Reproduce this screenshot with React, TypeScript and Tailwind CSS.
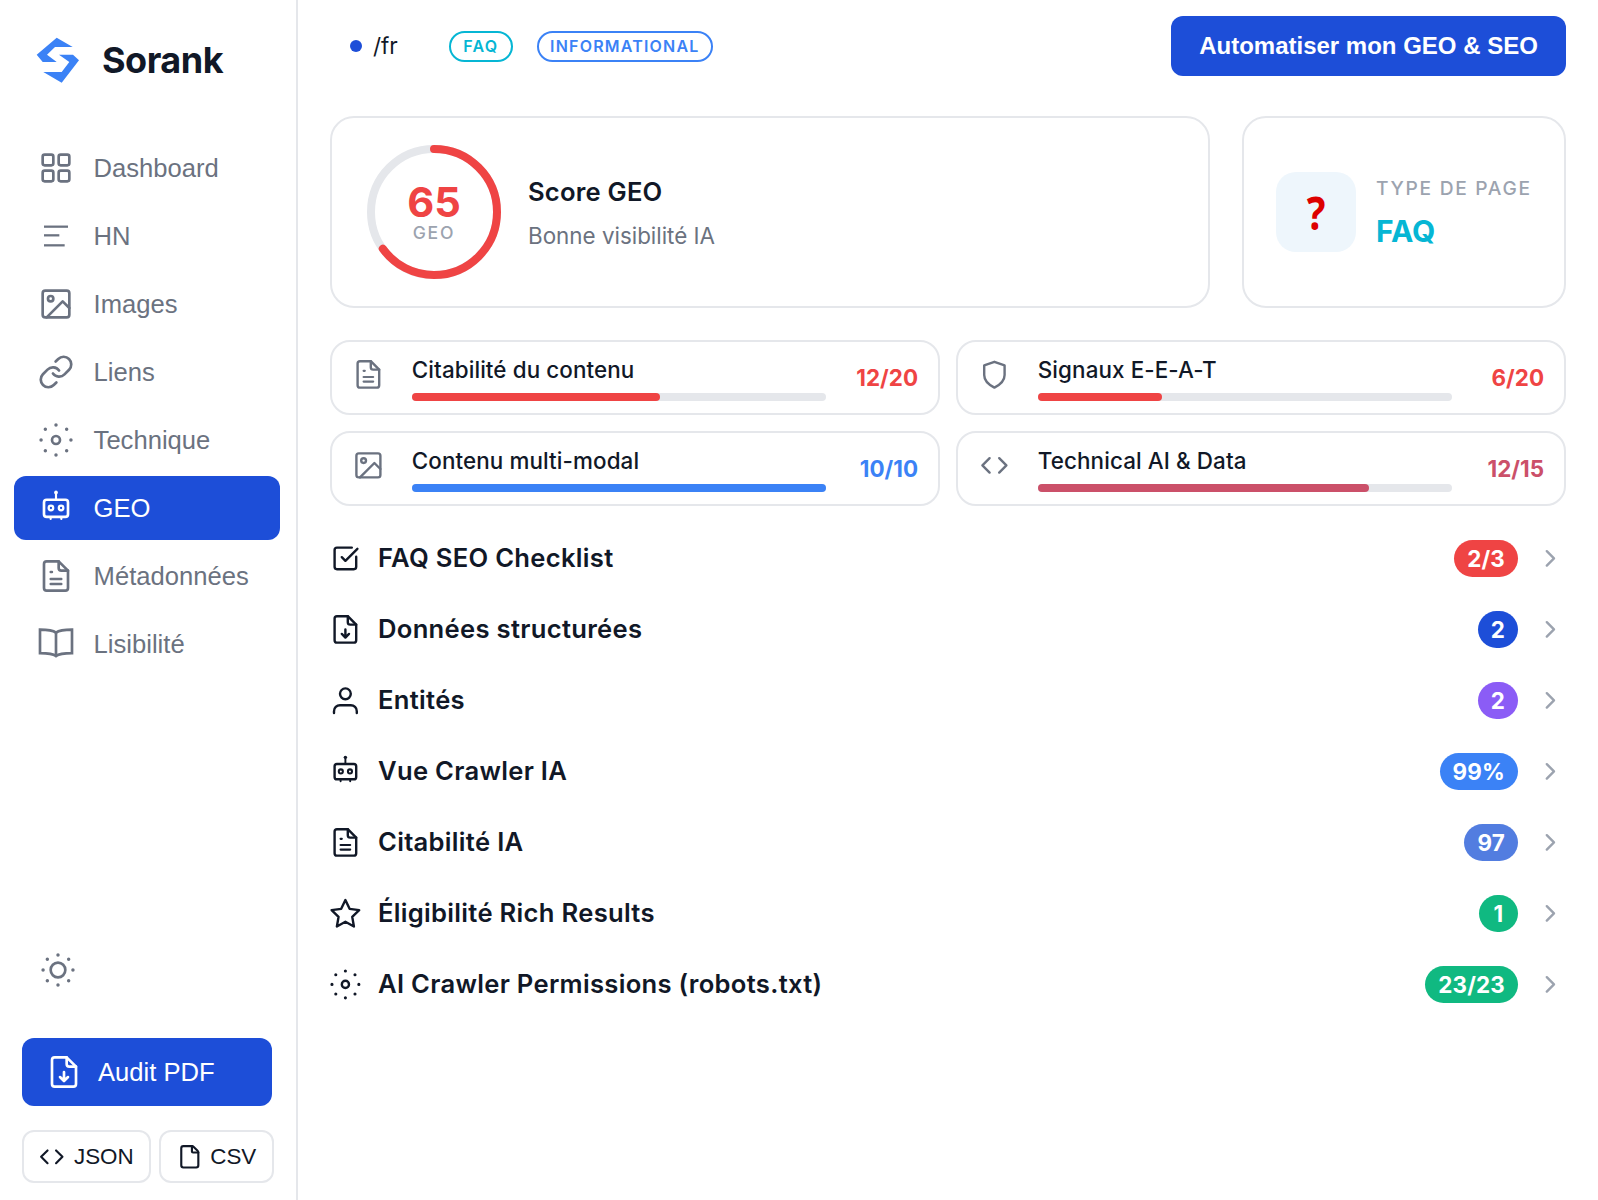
import { ChevronRight, Code, File, SquareCheckBig } from "lucide-react";
import type { ReactNode } from "react";

const font = { fontFamily: "Inter, 'Noto Sans', sans-serif" };
const buttonFont = { fontFamily: "'Liberation Sans', Arial, sans-serif" };

function Svg({ className, children }: { className?: string; children: ReactNode }) {
  return (
    <svg
      viewBox="0 0 24 24"
      fill="none"
      stroke="currentColor"
      strokeWidth={2}
      strokeLinecap="round"
      strokeLinejoin="round"
      className={`shrink-0 overflow-visible ${className ?? ""}`}
    >
      {children}
    </svg>
  );
}

type IconProps = { className?: string };

const GridIcon = ({ className }: IconProps) => (
  <Svg className={className}>
    <rect x="2" y="2" width="8" height="8" rx="1.5" />
    <rect x="14" y="2" width="8" height="8" rx="1.5" />
    <rect x="2" y="14" width="8" height="8" rx="1.5" />
    <rect x="14" y="14" width="8" height="8" rx="1.5" />
  </Svg>
);

const LinesIcon = ({ className }: IconProps) => (
  <Svg className={className}>
    <g strokeWidth={1.7} strokeLinecap="butt">
      <path d="M3 5h18" />
      <path d="M3 11.5h11.5" />
      <path d="M3 19h15.5" />
    </g>
  </Svg>
);

const ImageIcon = ({ className }: IconProps) => (
  <Svg className={className}>
    <rect x="2" y="2" width="20" height="20" rx="2" />
    <circle cx="8" cy="8" r="2" />
    <path d="M22 15l-5-5L5 22" />
  </Svg>
);

const LinkIcon = ({ className }: IconProps) => (
  <Svg className={className}>
    <g transform="translate(12 12) scale(1.15) translate(-12 -12)" strokeWidth={1.75}>
      <path d="M10 13a5 5 0 0 0 7.54.54l3-3a5 5 0 0 0-7.07-7.07l-1.72 1.71" />
      <path d="M14 11a5 5 0 0 0-7.54-.54l-3 3a5 5 0 0 0 7.07 7.07l1.71-1.71" />
    </g>
  </Svg>
);

const DotsIcon = ({ className, r = 3 }: IconProps & { r?: number }) => (
  <Svg className={className}>
    <circle cx="12" cy="12" r={r} />
    <path
      strokeWidth={2.6}
      d="M12 .8v.01M12 23.2v.01M.8 12h.01M23.2 12h.01M4 4v.01M20 4v.01M4 20v.01M20 20v.01"
    />
  </Svg>
);

const RobotIcon = ({ className }: IconProps) => (
  <Svg className={className}>
    <rect x="3" y="5.8" width="18" height="12.8" rx="2" />
    <path d="M12 .3v5.500" strokeWidth={1.6} />
    <circle cx="12" cy=".3" r="1.4" fill="currentColor" stroke="none" />
    <circle cx="8.2" cy="12" r="1.7" strokeWidth={1.7} />
    <circle cx="15.8" cy="12" r="1.7" strokeWidth={1.7} />
    <path d="M8 19v1.200M16 19v1.200" strokeWidth={1.6} />
  </Svg>
);

const FileTextIcon = ({ className }: IconProps) => (
  <Svg className={className}>
    <path d="M14 1H5a2 2 0 0 0-2 2v18a2 2 0 0 0 2 2h14a2 2 0 0 0 2-2V8z" />
    <path d="M14 1v5a2 2 0 0 0 2 2h5" />
    <path d="M8 9h1M8 14.2h8M8 18h8" strokeWidth={1.8} />
  </Svg>
);

const FileDownIcon = ({ className }: IconProps) => (
  <Svg className={className}>
    <path d="M14 1H5a2 2 0 0 0-2 2v18a2 2 0 0 0 2 2h14a2 2 0 0 0 2-2V8z" />
    <path d="M14 1v5a2 2 0 0 0 2 2h5" />
    <path d="M12 12v6.5M9 15.8l3 3 3-3" />
  </Svg>
);

const BookIcon = ({ className }: IconProps) => (
  <Svg className={className}>
    <path d="M12 3.5C10 2 7 1.2 0 1.2v17.6c7 0 10 .6 12 2.2 2-1.6 5-2.2 12-2.2V1.2c-7 0-10 .8-12 2.3z" strokeLinejoin="miter" />
    <path d="M12 3.5V21" />
  </Svg>
);

const ShieldIcon = ({ className }: IconProps) => (
  <Svg className={className}>
    <path d="M12 1.5l8.5 3v8c0 5-4.5 8.500-8.500 10.500-4-2-8.500-5.500-8.500-10.500v-8z" />
  </Svg>
);

const StarIcon = ({ className }: IconProps) => (
  <Svg className={className}>
    <path d="M12 .8l3.500 7.400 8 1.100-5.800 5.600 1.400 8L12 19l-7.100 3.900 1.400-8L.5 9.300l8-1.100z" />
  </Svg>
);

const UserIcon = ({ className }: IconProps) => (
  <Svg className={className}>
    <circle cx="12" cy="6.500" r="4.500" />
    <path d="M2.500 22.500V21a5 5 0 0 1 5-5h9a5 5 0 0 1 5 5v1.500" />
  </Svg>
);

const nav = [
  { label: "Dashboard", icon: GridIcon },
  { label: "HN", icon: LinesIcon },
  { label: "Images", icon: ImageIcon },
  { label: "Liens", icon: LinkIcon },
  { label: "Technique", icon: DotsIcon },
  { label: "GEO", icon: RobotIcon, active: true },
  { label: "Métadonnées", icon: FileTextIcon },
  { label: "Lisibilité", icon: BookIcon },
];

const metrics = [
  { label: "Citabilité du contenu", score: "12/20", icon: FileTextIcon, bar: "bg-[#ef4444]", text: "text-[#ef4444]", width: "w-[60%]" },
  { label: "Signaux E-E-A-T", score: "6/20", icon: ShieldIcon, bar: "bg-[#ef4444]", text: "text-[#ef4444]", width: "w-[30%]" },
  { label: "Contenu multi-modal", score: "10/10", icon: ImageIcon, bar: "bg-[#3b82f6]", text: "text-[#3b82f6]", width: "w-full" },
  { label: "Technical AI & Data", score: "12/15", icon: Code, bar: "bg-[#cb5069]", text: "text-[#cb5069]", width: "w-[80%]" },
];

const rows = [
  { label: "FAQ SEO Checklist", badge: "2/3", icon: SquareCheckBig, color: "bg-[#ef4444]" },
  { label: "Données structurées", badge: "2", icon: FileDownIcon, color: "bg-[#1d4ed8]" },
  { label: "Entités", badge: "2", icon: UserIcon, color: "bg-[#8b5cf6]" },
  { label: "Vue Crawler IA", badge: "99%", icon: RobotIcon, color: "bg-[#3b82f6]" },
  { label: "Citabilité IA", badge: "97", icon: FileTextIcon, color: "bg-[#527de0]" },
  { label: "Éligibilité Rich Results", badge: "1", icon: StarIcon, color: "bg-[#10b981]" },
  { label: "AI Crawler Permissions (robots.txt)", badge: "23/23", icon: DotsIcon, color: "bg-[#10b981]" },
];

function Sidebar() {
  return (
    <aside className="flex h-[1200px] w-[298px] shrink-0 flex-col border-r-2 border-[#e5e7eb] pb-[17px]">
      <div className="mt-[32px] ml-[30px] flex items-center gap-[16px]">
        <svg viewBox="0 0 56 56" className="h-14 w-14 shrink-0" fill="#3b82f6">
          <path d="M26.700 5.700L42.700 15H25l-8 7.700L26.700 30h-14l-6-7.300z" />
          <path d="M29 22.700h14l6 5.600-17.300 22.400L13.300 40h18.400l7.600-10z" />
        </svg>
        <span className="text-[36px] leading-[56px] font-bold tracking-[-0.5px] text-[#111827]">Sorank</span>
      </div>
      <nav className="mt-[48px] flex flex-col gap-[4px] pr-[16px] pl-[14px]" style={buttonFont}>
        {nav.map((item) => {
          const Icon = item.icon;
          return (
            <div
              key={item.label}
              className={`flex h-[64px] items-center gap-[21.600px] rounded-[12px] pl-[26px] text-[25.600px] ${
                item.active ? "bg-[#1d4ed8] text-white" : "text-[#6b7280]"
              }`}
            >
              <Icon className="h-8 w-8" />
              <span>{item.label}</span>
            </div>
          );
        })}
      </nav>
      <div className="mt-auto flex flex-col px-[22px]" style={buttonFont}>
        <div className="ml-[20px] text-[#6b7280]">
          <DotsIcon r={5.500} className="h-8 w-8" />
        </div>
        <button className="mt-[52px] flex h-[68px] w-[250px] items-center gap-[18px] rounded-[12px] bg-[#1d4ed8] pl-[26px] text-[25.600px] text-white">
          <FileDownIcon className="h-8 w-8" />
          Audit PDF
        </button>
        <div className="mt-[24px] flex gap-[8px]">
          <button className="flex h-[53px] w-[129px] items-center justify-center gap-[9px] rounded-[12px] border-2 border-[#e5e7eb] text-[22.400px] text-[#111827]">
            <Code className="h-[25.600px] w-[25.600px]" />
            JSON
          </button>
          <button className="flex h-[53px] w-[115px] items-center justify-center gap-[8px] rounded-[12px] border-2 border-[#e5e7eb] text-[22.400px] text-[#111827]">
            <File className="h-[25.600px] w-[25.600px]" />
            CSV
          </button>
        </div>
      </div>
    </aside>
  );
}

function ScoreRing() {
  return (
    <div className="relative h-[134px] w-[134px] shrink-0">
      <svg viewBox="0 0 134 134" className="h-full w-full -rotate-90">
        <circle cx="67" cy="67" r="63" fill="none" stroke="#e5e7eb" strokeWidth="8" />
        <circle
          cx="67"
          cy="67"
          r="63"
          fill="none"
          stroke="#ef4444"
          strokeWidth="8"
          strokeLinecap="round"
          strokeDasharray="257.300 395.800"
        />
      </svg>
      <div className="absolute inset-0 flex flex-col items-center justify-center">
        <span className="mt-[2px] text-[41.600px] leading-[40px] font-bold text-[#ef4444]">65</span>
        <span className="text-[17.600px] leading-[22px] font-medium tracking-[1.800px] text-[#9ca3af]">GEO</span>
      </div>
    </div>
  );
}

export default function App() {
  return (
    <div className="flex min-h-[1200px] bg-white" style={font}>
      <Sidebar />
      <main className="flex min-w-0 flex-1 flex-col pt-[16px] pr-[32px] pl-[32px]">
        <header className="flex h-[60px] items-center">
          <span className="ml-[20px] h-3 w-3 rounded-full bg-[#1d4ed8]" />
          <span className="ml-[11px] text-[22.400px] text-[#111827]">/fr</span>
          <span className="ml-[51px] flex h-[31px] w-[64px] items-center justify-center rounded-full border-2 border-[#06b6d4] text-[16px] font-semibold tracking-[1.200px] text-[#06b6d4]">
            FAQ
          </span>
          <span className="ml-[24px] flex h-[31px] w-[176px] items-center justify-center rounded-full border-2 border-[#3b82f6] text-[16px] font-semibold tracking-[1.200px] text-[#3b82f6]">
            INFORMATIONAL
          </span>
          <button
            className="ml-auto h-[60px] w-[395px] rounded-[12px] bg-[#1d4ed8] text-[24px] font-bold text-white"
            style={buttonFont}
          >
            Automatiser mon GEO &amp; SEO
          </button>
        </header>

        <section className="mt-[40px] flex h-[192px] gap-[32px]">
          <div className="flex flex-1 items-center gap-[27px] rounded-[24px] border-2 border-[#e5e7eb] pl-[35px]">
            <ScoreRing />
            <div className="pt-[2px]">
              <div className="text-[25.600px] leading-[36px] font-semibold tracking-[0.200px] text-[#111827]">Score GEO</div>
              <div className="mt-[10px] text-[22.400px] leading-[32px] text-[#6b7280]">Bonne visibilité IA</div>
            </div>
          </div>
          <div className="flex w-[324px] items-center gap-[20px] rounded-[24px] border-2 border-[#e5e7eb] pl-[32px]">
            <div className="flex h-[80px] w-[80px] items-center justify-center rounded-[20px] bg-[#eef6fc]">
              <span
                className="scale-x-[0.85] text-[46px] leading-none font-bold text-[#dd0000]"
                style={{ fontFamily: "'Noto Sans', sans-serif" }}
              >
                ?
              </span>
            </div>
            <div className="pt-[1px]">
              <div className="text-[19.200px] leading-[28px] font-medium tracking-[1.700px] text-[#9ca3af]">TYPE DE PAGE</div>
              <div className="mt-[9px] text-[30px] leading-[40px] font-bold text-[#06b6d4]">FAQ</div>
            </div>
          </div>
        </section>

        <section className="mt-[32px] grid grid-cols-2 gap-[16px]">
          {metrics.map((m) => {
            const Icon = m.icon;
            return (
              <div key={m.label} className="flex h-[75px] items-center rounded-[20px] border-2 border-[#e5e7eb] pr-[20px] pl-[22px]">
                <Icon className="-mt-[6px] h-[28.800px] w-[28.800px] text-[#6b7280]" />
                <div className="ml-[29px] w-[414px] pt-[1px]">
                  <div className="text-[22.400px] leading-[30px] font-medium tracking-[0.100px] text-[#111827]">{m.label}</div>
                  <div className="mt-[7.500px] h-[8px] rounded-full bg-[#e5e7eb]">
                    <div className={`h-full rounded-full ${m.bar} ${m.width}`} />
                  </div>
                </div>
                <div className={`ml-auto text-[22.400px] font-bold ${m.text}`}>{m.score}</div>
              </div>
            );
          })}
        </section>

        <section className="mt-[17px] flex flex-col">
          {rows.map((r) => {
            const Icon = r.icon;
            return (
              <div key={r.label} className="flex h-[71px] items-center">
                <Icon className="ml-[1px] h-[28.800px] w-[28.800px] text-[#111827]" />
                <span className="ml-[18.200px] text-[25.600px] font-semibold tracking-[0.300px] text-[#111827]">{r.label}</span>
                <span className={`ml-auto flex h-[37px] min-w-[39px] items-center justify-center rounded-full px-[13px] text-[22.400px] font-bold tracking-[0.200px] text-white ${r.color}`}>
                  {r.badge}
                </span>
                <ChevronRight className="mr-[1px] ml-[18.200px] h-[28.800px] w-[28.800px] text-[#9ca3af]" />
              </div>
            );
          })}
        </section>
      </main>
    </div>
  );
}
